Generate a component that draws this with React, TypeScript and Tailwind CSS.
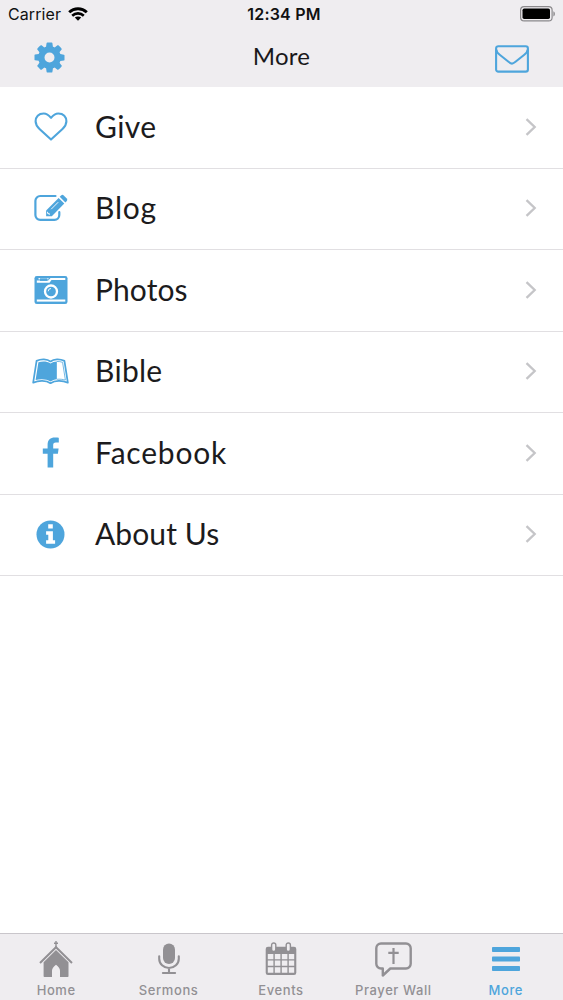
import type { ReactNode } from 'react';

function WifiIcon() {
  return (
    <svg width="20" height="14" viewBox="0 0 20 14" fill="none" stroke="#000" strokeWidth="2.9">
      <path d="M1.200 5.300C6.200.6 13.800.6 18.800 5.300" />
      <path d="M4.200 8.700C7.500 5.600 12.500 5.600 15.800 8.700" strokeWidth="2.600" />
      <path d="M6.800 10.600C8.700 9 11.300 9 13.200 10.600L10 13.800Z" fill="#000" stroke="none" />
    </svg>
  );
}

function BatteryIcon() {
  return (
    <svg width="36" height="16" viewBox="0 0 36 16">
      <rect x="0.600" y="0.600" width="31.500" height="14.300" rx="3.500" fill="none" stroke="#8b898c" strokeWidth="1.200" />
      <rect x="2.500" y="2.500" width="27.500" height="10.500" rx="1.700" fill="#000" />
      <path d="M33.400 5.200c2 .8 2 4.400 0 5.200z" fill="#8b898c" />
    </svg>
  );
}

function GearIcon() {
  return (
    <svg width="35" height="35" viewBox="0 0 1792 1792" fill="currentColor">
      <path d="M1152 896q0-106-75-181t-181-75-181 75-75 181 75 181 181 75 181-75 75-181zm512-109v222q0 12-8 23t-20 13l-185 28q-19 54-39 91 35 50 107 138 10 12 10 25t-9 23q-27 37-99 108t-94 71q-12 0-26-9l-138-108q-44 23-91 38-16 136-29 186-7 28-36 28h-222q-14 0-24.500-8.500t-11.500-21.500l-28-184q-49-16-90-37l-141 107q-10 9-25 9-14 0-25-11-126-114-165-168-7-10-7-23 0-12 8-23 15-21 51-66.500t54-70.500q-27-50-41-99l-183-27q-13-2-21-12.500t-8-23.500v-222q0-12 8-23t19-13l186-28q14-46 39-92-40-57-107-138-10-12-10-24 0-10 9-23 26-36 98.500-107.500t94.500-71.500q13 0 26 10l138 107q44-23 91-38 16-136 29-186 7-28 36-28h222q14 0 24.500 8.500t11.500 21.500l28 184q49 16 90 37l142-107q9-9 24-9 13 0 25 10 129 119 165 170 7 8 7 22 0 12-8 23-15 21-51 66.500t-54 70.500q26 50 41 98l183 28q13 2 21 12.500t8 23.500z" />
    </svg>
  );
}

function MailIcon() {
  return (
    <svg width="34" height="28" viewBox="0 0 34 28" fill="none" stroke="currentColor" strokeWidth="2.100">
      <rect x="1.100" y="1.200" width="31.800" height="25.400" rx="2.200" />
      <path d="M1.300 4.500c0 2 1.500 3.700 3.400 5.200l8.800 7c1.500 1.200 2.400 1.900 3.500 1.900s2-.7 3.500-1.900l8.800-7c1.900-1.500 3.400-3.200 3.400-5.200" />
    </svg>
  );
}

function HeartIcon() {
  return (
    <svg width="34" height="29" viewBox="0 0 34 29" fill="none" stroke="currentColor" strokeWidth="2.100" strokeLinejoin="round">
      <path d="M17 5.800C15.300 3.700 13 1.500 9.700 1.500 4.500 1.500 1.600 4.600 1.600 9.300c0 3.300 2 5.900 3.900 7.700L17 27.600 28.500 17c1.900-1.800 3.900-4.400 3.900-7.700 0-4.700-2.900-7.800-8.100-7.800-3.300 0-5.600 2.200-7.300 4.300z" />
    </svg>
  );
}

function EditIcon() {
  return (
    <svg width="34" height="28" viewBox="0 0 34 28">
      <path
        d="M21.500 2H6.200A4.800 4.800 0 0 0 1.400 6.800v14.300a4.800 4.800 0 0 0 4.800 4.800h14.300a4.800 4.800 0 0 0 4.800-4.800v-2.900"
        fill="none"
        stroke="currentColor"
        strokeWidth="2.200"
        strokeLinecap="round"
      />
      <path d="M24.600 3.900l5.700 5.700L17.800 22.200h-5.700v-5.700z" fill="currentColor" />
      <path d="M25.700 2.800l1.400-1.400q1.300-1.200 2.600 0l3.100 3.100q1.100 1.300 0 2.600l-1.400 1.400z" fill="currentColor" />
      <path d="M17.200 15.200l7-7M13.500 17.800v1.600h1.700v1.600" fill="none" stroke="#fff" strokeWidth="0.900" />
    </svg>
  );
}

function CameraIcon() {
  return (
    <svg width="34" height="28" viewBox="0 0 34 28">
      <rect x="0.500" y="0" width="33" height="28" rx="2.300" fill="currentColor" />
      <path d="M2.800 6.800V4.500h11.400l2.300-2.400h14.800v1.800H17.500l-2 2.900z" fill="#fff" />
      <path d="M4.500 2.100h10v1.300h-10z" fill="#fff" />
      <rect x="6" y="2.300" width="7.400" height="2.600" fill="currentColor" />
      <path d="M2.800 23.500h28.500v2.100H2.800z" fill="#fff" />
      <circle cx="17" cy="15.500" r="6" fill="none" stroke="#fff" strokeWidth="2.300" />
      <path d="M14.200 15.300a2.800 2.800 0 0 1 2.800-2.800" fill="none" stroke="#fff" strokeWidth="0.900" />
    </svg>
  );
}

function BookIcon() {
  return (
    <svg width="38" height="27" viewBox="0 0 38 27">
      <path
        d="M19 3.200C15.500.6 9.500.4 4.700 2.600L1.200 25c5.600-2.500 13.200-2.600 17.800.5 4.600-3.100 12.200-3 17.800-.5L33.300 2.600C28.500.4 22.500.6 19 3.200z"
        fill="none"
        stroke="currentColor"
        strokeWidth="1.800"
        strokeLinejoin="round"
      />
      <path d="M19 5.200C15.400 2.900 10.600 2.700 6.600 4.100L3.700 22.300c5-1.500 11.200-1.300 15.300 1.500 2-1.300 4.100-2 6.500-2.300V3.200c-2.400.2-4.700.8-6.500 2z" fill="currentColor" />
      <path d="M25.500 3.200c2.100-.1 4.100.2 5.900.9l2.900 18.200c-2.800-.8-5.900-1.100-8.800-.8" fill="none" stroke="currentColor" strokeWidth="0.800" />
    </svg>
  );
}

function FacebookIcon() {
  return (
    <svg width="18" height="31" viewBox="0 0 18 31" fill="currentColor">
      <path d="M16.800.7v4.800h-2.900c-2.200 0-2.700 1.100-2.700 2.600v3.400h5.400l-.7 5.300h-4.700v13.700H5.600V16.800H.8v-5.300h4.800V7.500C5.600 2.800 8.500.4 12.700.4c2 0 3.700.1 4.100.3z" />
    </svg>
  );
}

function InfoIcon() {
  return (
    <svg width="29" height="29" viewBox="0 0 29 29">
      <circle cx="14.500" cy="14.500" r="14" fill="currentColor" />
      <path d="M12.200 4.200h4.600v4.200h-4.600zM10.100 11.200h6.800v9h2.200v3.500h-9v-3.500h2.200v-5.500h-2.200z" fill="#fff" />
    </svg>
  );
}

function ChevronIcon() {
  return (
    <svg width="12" height="18" viewBox="0 0 12 18" fill="none" stroke="#c5c5c8" strokeWidth="2.300">
      <path d="M1.500 1.200L9.700 9l-8.200 7.800" />
    </svg>
  );
}

function ChurchIcon() {
  return (
    <svg width="34" height="37" viewBox="0 0 34 37" fill="currentColor">
      <path d="M17 0v7M15 2.300h4" stroke="currentColor" strokeWidth="1.400" />
      <path d="M1 22L17 6.200 33 22" fill="none" stroke="currentColor" strokeWidth="2" />
      <path d="M17 9L4.600 21.300v14q0 .7.8.7H13v-6.300q0-3 4-6 4 3 4 6V36h7.700q.8 0 .8-.7v-14z" />
    </svg>
  );
}

function MicIcon() {
  return (
    <svg width="22" height="32" viewBox="0 0 22 32" fill="none" stroke="currentColor" strokeWidth="2.100" strokeLinecap="round">
      <rect x="5" y="0.500" width="12" height="20.500" rx="6" fill="currentColor" stroke="none" />
      <path d="M1.200 13.200v2.500a9.800 9.300 0 0 0 19.600 0v-2.500M11 25v4.800M4.900 30h12.200" />
    </svg>
  );
}

function CalendarIcon() {
  return (
    <svg width="32" height="34" viewBox="0 0 32 34">
      <path
        fillRule="evenodd"
        fill="currentColor"
        d="M3 4.800h26q2.300 0 2.300 2.300v23.600q0 2.300-2.300 2.300H3Q.7 33 .7 30.700V7.100Q.7 4.800 3 4.800zM2.800 12v5.200h5.600V12zm7 0v5.200h5.600V12zm7 0v5.200h5.600V12zm7 0v5.200h5.400V12zm-21 6.600v5.200h5.600v-5.200zm7 0v5.200h5.600v-5.200zm7 0v5.200h5.600v-5.200zm7 0v5.200h5.400v-5.200zm-21 6.600v5.600h5.600v-5.600zm7 0v5.600h5.600v-5.600zm7 0v5.600h5.600v-5.600zm7 0v5.600h5.400v-5.600z"
      />
      <g fill="#efedf0" stroke="currentColor" strokeWidth="1.400">
        <rect x="6.600" y="1" width="4.200" height="8.500" rx="2.100" />
        <rect x="21.200" y="1" width="4.200" height="8.500" rx="2.100" />
      </g>
    </svg>
  );
}

function PrayerIcon() {
  return (
    <svg width="37" height="35" viewBox="0 0 37 35" fill="none" stroke="currentColor" strokeWidth="2.400" strokeLinejoin="round">
      <path d="M6 1.500h25a4.700 4.700 0 0 1 4.700 4.700v15.600a4.700 4.700 0 0 1-4.700 4.700H15.300L7.800 33.500v-7H6a4.700 4.700 0 0 1-4.700-4.700V6.200A4.700 4.700 0 0 1 6 1.500z" />
      <path d="M18.500 6v16M13.300 10.800h10.400" strokeWidth="2.200" />
    </svg>
  );
}

function BarsIcon() {
  return (
    <svg width="28" height="24" viewBox="0 0 28 24" fill="currentColor">
      <rect y="0" width="28" height="5" rx="0.800" />
      <rect y="9.500" width="28" height="5" rx="0.800" />
      <rect y="19" width="28" height="5" rx="0.800" />
    </svg>
  );
}

interface MenuItem {
  label: string;
  icon: ReactNode;
  tracking: string;
}

const menuItems: MenuItem[] = [
  { label: 'Give', icon: <HeartIcon />, tracking: 'tracking-[0.4px]' },
  { label: 'Blog', icon: <EditIcon />, tracking: 'tracking-[0.8px]' },
  { label: 'Photos', icon: <CameraIcon />, tracking: 'tracking-[0.1px]' },
  { label: 'Bible', icon: <BookIcon />, tracking: 'tracking-[0.3px]' },
  { label: 'Facebook', icon: <FacebookIcon />, tracking: 'tracking-[0.8px]' },
  { label: 'About Us', icon: <InfoIcon />, tracking: 'tracking-[0.1px]' },
];

const tabs = [
  { label: 'Home', icon: <ChurchIcon /> },
  { label: 'Sermons', icon: <MicIcon /> },
  { label: 'Events', icon: <CalendarIcon /> },
  { label: 'Prayer Wall', icon: <PrayerIcon /> },
  { label: 'More', icon: <BarsIcon />, active: true },
];

export default function App() {
  return (
    <div className="flex h-[1000px] w-[563px] flex-col overflow-hidden bg-white font-['Inter',sans-serif] text-[#111]">
      <header className="h-[87px] bg-[#efedf0]">
        <div className="grid h-7 grid-cols-3 items-center pr-[7px] pl-2">
          <div className="flex items-center gap-[7px] text-base tracking-[0.1px]">
            <span>Carrier</span>
            <WifiIcon />
          </div>
          <span className="pl-1 text-center text-base font-semibold tracking-[0.2px]">12:34 PM</span>
          <div className="flex justify-end">
            <BatteryIcon />
          </div>
        </div>
        <div className="grid h-[59px] grid-cols-3 items-center pr-[34px] pl-8 text-[#4ea5dc]">
          <button className="w-fit" aria-label="Settings">
            <GearIcon />
          </button>
          <h1 className="pb-[3px] pl-0.5 text-center font-['Lato',sans-serif] text-2xl tracking-[0.3px] text-[#19181a]">
            More
          </h1>
          <button className="mt-0.5 w-fit justify-self-end" aria-label="Messages">
            <MailIcon />
          </button>
        </div>
      </header>

      <ul>
        {menuItems.map((item) => (
          <li key={item.label} className="flex h-[81.5px] items-center border-b border-[#e1dfe2] pr-[26px] pb-px pl-8">
            <span className="flex w-[37px] justify-center text-[#4ea5dc]">{item.icon}</span>
            <span className={`ml-[26px] flex-1 pb-px font-['Lato',sans-serif] text-[30px] text-[#1c1b1d] ${item.tracking}`}>
              {item.label}
            </span>
            <ChevronIcon />
          </li>
        ))}
      </ul>

      <nav className="mt-auto grid h-[67px] grid-cols-5 border-t border-[#c9c6cb] bg-[#efedf0] pr-px">
        {tabs.map((tab) => (
          <button
            key={tab.label}
            className={`flex flex-col items-center ${tab.active ? 'text-[#4ea5dc]' : 'text-[#929094]'}`}
          >
            <span className="mt-1.5 flex h-[38px] items-center">{tab.icon}</span>
            <span className="mt-1 text-[13px] leading-4 font-medium tracking-[0.6px]">{tab.label}</span>
          </button>
        ))}
      </nav>
    </div>
  );
}
